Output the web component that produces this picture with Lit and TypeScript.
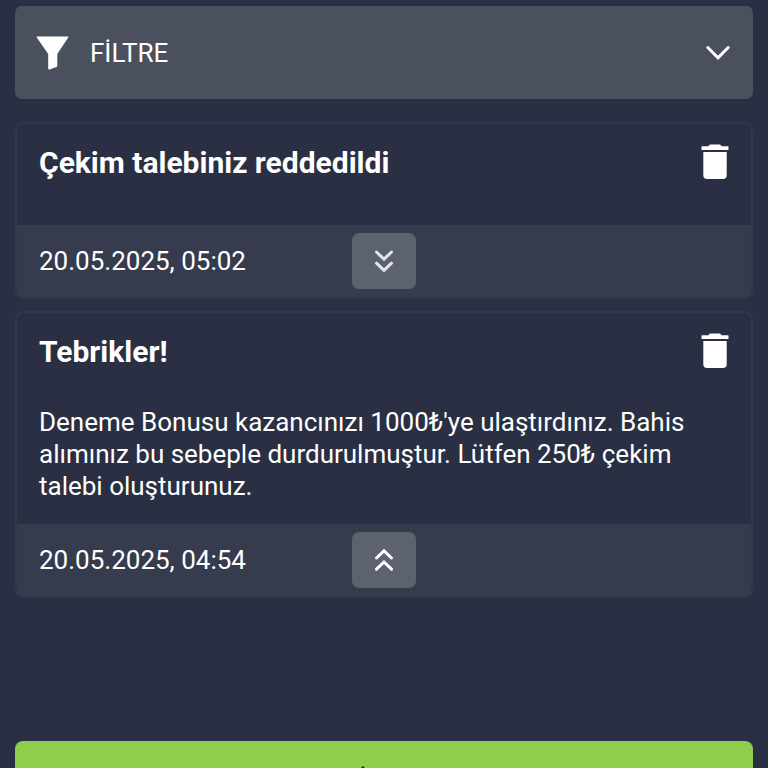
import { LitElement, html, css, svg, nothing } from "lit";
import { customElement, property, state } from "lit/decorators.js";

interface Message {
  id: number;
  title: string;
  date: string;
  text: string;
  open: boolean;
}

@customElement("message-card")
class MessageCard extends LitElement {
  @property({ attribute: false }) message!: Message;

  static styles = css`
    :host {
      display: block;
    }
    .card {
      border: 2px solid #32374a;
      border-radius: 8px;
      overflow: hidden;
    }
    .body {
      padding: 20px 22px 22px;
    }
    .head {
      display: flex;
      justify-content: space-between;
      align-items: flex-start;
      min-height: 59px;
    }
    .title {
      margin: 0;
      font-size: 30px;
      line-height: 38px;
      font-weight: 700;
    }
    .text {
      margin: 14px 0 0;
      font-size: 26px;
      line-height: 32px;
    }
    .foot {
      display: grid;
      grid-template-columns: 1fr auto 1fr;
      align-items: center;
      padding: 8px 22px;
      background: #363b4d;
    }
    .date {
      font-size: 26px;
      line-height: 32px;
    }
    button {
      display: flex;
      align-items: center;
      justify-content: center;
      border: 0;
      padding: 0;
      color: inherit;
      background: none;
      cursor: pointer;
    }
    .toggle {
      width: 64px;
      height: 56px;
      border-radius: 7px;
      background: #5d626f;
    }
    .closed {
      color: #e2e4ee;
    }
    svg {
      display: block;
    }
  `;

  private emit(name: string) {
    this.dispatchEvent(new CustomEvent(name, { detail: this.message.id }));
  }

  render() {
    const m = this.message;
    return html`
      <article class="card">
        <div class="body">
          <div class="head">
            <h2 class="title">${m.title}</h2>
            <button aria-label="Sil" @click=${() => this.emit("remove")}>
              <svg width="28" height="36" viewBox="0 0 28 36" fill="currentColor">
                <path d="M1 2.200h6.400l1.200-1.500Q8.900 .4 9.400 .4h9.200q.5 0 .8.300l1.200 1.500H27q.5 0 .5.5v3.300H.5V2.700q0-.5.5-.5zM2.300 8h23.400v23.200q0 3.800-3.800 3.800H6.100q-3.800 0-3.800-3.800z" />
              </svg>
            </button>
          </div>
          ${m.open ? html`<p class="text">${m.text}</p>` : nothing}
        </div>
        <div class="foot">
          <time class="date">${m.date}</time>
          <button
            class="toggle ${m.open ? "" : "closed"}"
            aria-label=${m.open ? "Kapat" : "Aç"}
            aria-expanded=${m.open ? "true" : "false"}
            @click=${() => this.emit("toggle-open")}
          >
            <svg width="20" height="24" viewBox="0 0 20 24" fill="none" stroke="currentColor" stroke-width="3" stroke-linecap="round">
              ${m.open
                ? svg`<path d="M2.500 10 10 2.800l7.500 7.200M2.500 21.200 10 14l7.500 7.200" />`
                : svg`<path d="M2.500 3 10 10.200l7.500-7.200M2.500 14.200 10 21.400l7.500-7.200" />`}
            </svg>
          </button>
        </div>
      </article>
    `;
  }
}

@customElement("app-root")
class AppRoot extends LitElement {
  @state() private messages: Message[] = [
    {
      id: 1,
      title: "Çekim talebiniz reddedildi",
      date: "20.05.2025, 05:02",
      text: "",
      open: false,
    },
    {
      id: 2,
      title: "Tebrikler!",
      date: "20.05.2025, 04:54",
      text: "Deneme Bonusu kazancınızı 1000₺'ye ulaştırdınız. Bahis alımınız bu sebeple durdurulmuştur. Lütfen 250₺ çekim talebi oluşturunuz.",
      open: true,
    },
  ];

  static styles = css`
    :host {
      display: block;
      height: 100vh;
      overflow-y: auto;
      scrollbar-width: none;
      box-sizing: border-box;
      padding: 6px 15px 0;
      background: #2a2f43;
      color: #fff;
      font-family: Roboto, "Noto Sans", sans-serif;
    }
    button {
      width: 100%;
      border: 0;
      font: inherit;
      font-size: 26px;
      line-height: 32px;
      cursor: pointer;
    }
    .filter {
      display: flex;
      align-items: center;
      height: 93px;
      padding: 0 22px 0 21px;
      border-radius: 7px;
      background: #4b505f;
      color: inherit;
    }
    .label {
      flex: 1;
      margin-left: 21px;
      text-align: left;
    }
    .list {
      display: flex;
      flex-direction: column;
      gap: 12px;
      margin-top: 23px;
    }
    .apply {
      height: 78px;
      margin: 143px 0 24px;
      border-radius: 8px;
      background: #8fce4d;
      color: #14200c;
    }
  `;

  private toggle(id: number) {
    this.messages = this.messages.map((m) => (m.id === id ? { ...m, open: !m.open } : m));
  }

  private remove(id: number) {
    this.messages = this.messages.filter((m) => m.id !== id);
  }

  render() {
    return html`
      <button class="filter">
        <svg width="33" height="34" viewBox="0 0 33 34" fill="currentColor">
          <path d="M1.500 .4h30q1.400 0 .7 1.200L21.300 18v11.800q0 .8-.8 1.200l-7 2.400q-1.300.3-1.300-.8V18L.8 1.600Q.1.400 1.500.4z" />
        </svg>
        <span class="label">FİLTRE</span>
        <svg width="26" height="16" viewBox="0 0 26 16" fill="none" stroke="currentColor" stroke-width="3" stroke-linecap="round">
          <path d="M2.800 2.500 13 12.800 23.200 2.500" />
        </svg>
      </button>
      <div class="list">
        ${this.messages.map(
          (m) => html`<message-card
            .message=${m}
            @toggle-open=${() => this.toggle(m.id)}
            @remove=${() => this.remove(m.id)}
          ></message-card>`
        )}
      </div>
      <button class="apply">FİLTRE</button>
    `;
  }
}
